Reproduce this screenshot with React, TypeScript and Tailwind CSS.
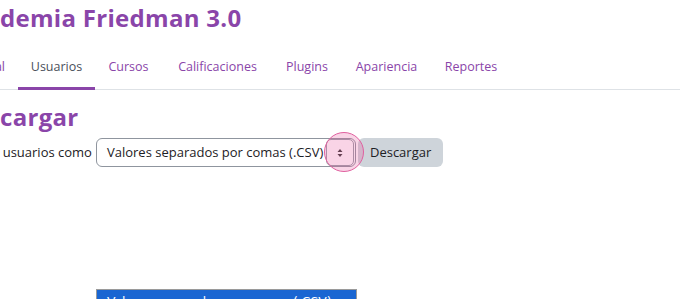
const tabs = [
  { label: 'al', w: 'w-[21px]', active: false },
  { label: 'Usuarios', w: 'w-[77px]', active: true },
  { label: 'Cursos', w: 'w-[67px]', active: false },
  { label: 'Calificaciones', w: 'w-[111px]', active: false },
  { label: 'Plugins', w: 'w-[68px]', active: false },
  { label: 'Apariencia', w: 'w-[91px]', active: false },
  { label: 'Reportes', w: 'w-[78px]', active: false },
];

export default function App() {
  return (
    <div className="relative w-[680px] h-[299px] overflow-hidden bg-white font-['Open_Sans',sans-serif]">
      {/* Site title */}
      <h1 className="pt-[1px] text-[24px] font-bold leading-[34px] tracking-[0.3px] text-[#8a45a9]">
        demia Friedman 3.0
      </h1>

      {/* Secondary navigation */}
      <nav className="mt-[9px] flex border-b border-[#dee2e6]">
        {tabs.map((t, i) => (
          <div
            key={t.label}
            className={`${t.w} flex h-[46px] items-center border-b-[3px] -mb-px pt-[4px] text-[12.5px] ${
              i === 0 ? 'justify-end pr-[13px] -ml-[3px]' : 'justify-center'
            } ${t.active ? 'border-[#8a45a9] text-[#4a4f5a]' : 'border-transparent text-[#8a45a9]'}`}
          >
            {t.label}
          </div>
        ))}
      </nav>

      {/* Page heading */}
      <h2 className="mt-[12px] text-[24px] font-bold leading-[30px] tracking-[0.3px] text-[#8a45a9]">cargar</h2>

      {/* Download row */}
      <div className="mt-[6px] flex items-center text-[13px] text-[#1d2125]">
        <span className="-ml-[6px] mr-[4px]">r usuarios como</span>
        <div className="flex h-[29px] w-[260px] items-center rounded-[6px] border border-[#8f959e] pl-[10px] pr-[1px]">
          <span className="flex-1 whitespace-nowrap">Valores separados por comas (.CSV)</span>
          <div className="flex h-[27px] w-[28px] shrink-0 items-center justify-center rounded-[5px] border border-[#9aa0a8]">
            <svg width="6" height="10" viewBox="0 0 6 10">
              <path d="M3 1 L5.5 4 H0.5 Z M3 9 L5.5 6 H0.5 Z" fill="#3a3a3a" />
            </svg>
          </div>
        </div>
        <button className="ml-[2px] h-[29px] rounded-[6px] bg-[#ced4da] px-[12px]">Descargar</button>
      </div>

      {/* Click marker */}
      <div className="absolute left-[324px] top-[132px] h-[40px] w-[40px] rounded-full border-[1.5px] border-[#e0609f] bg-[#e9549a]/25" />

      {/* Open native dropdown */}
      <div className="absolute left-[96px] top-[289px] w-[261px] border border-[#9a9a9a] bg-[#1a66d2] px-[10px] pt-[4px] font-['DejaVu_Sans',sans-serif] text-[12.4px] leading-[16px] text-white">
        Valores separados por comas (.CSV)
      </div>
    </div>
  );
}
